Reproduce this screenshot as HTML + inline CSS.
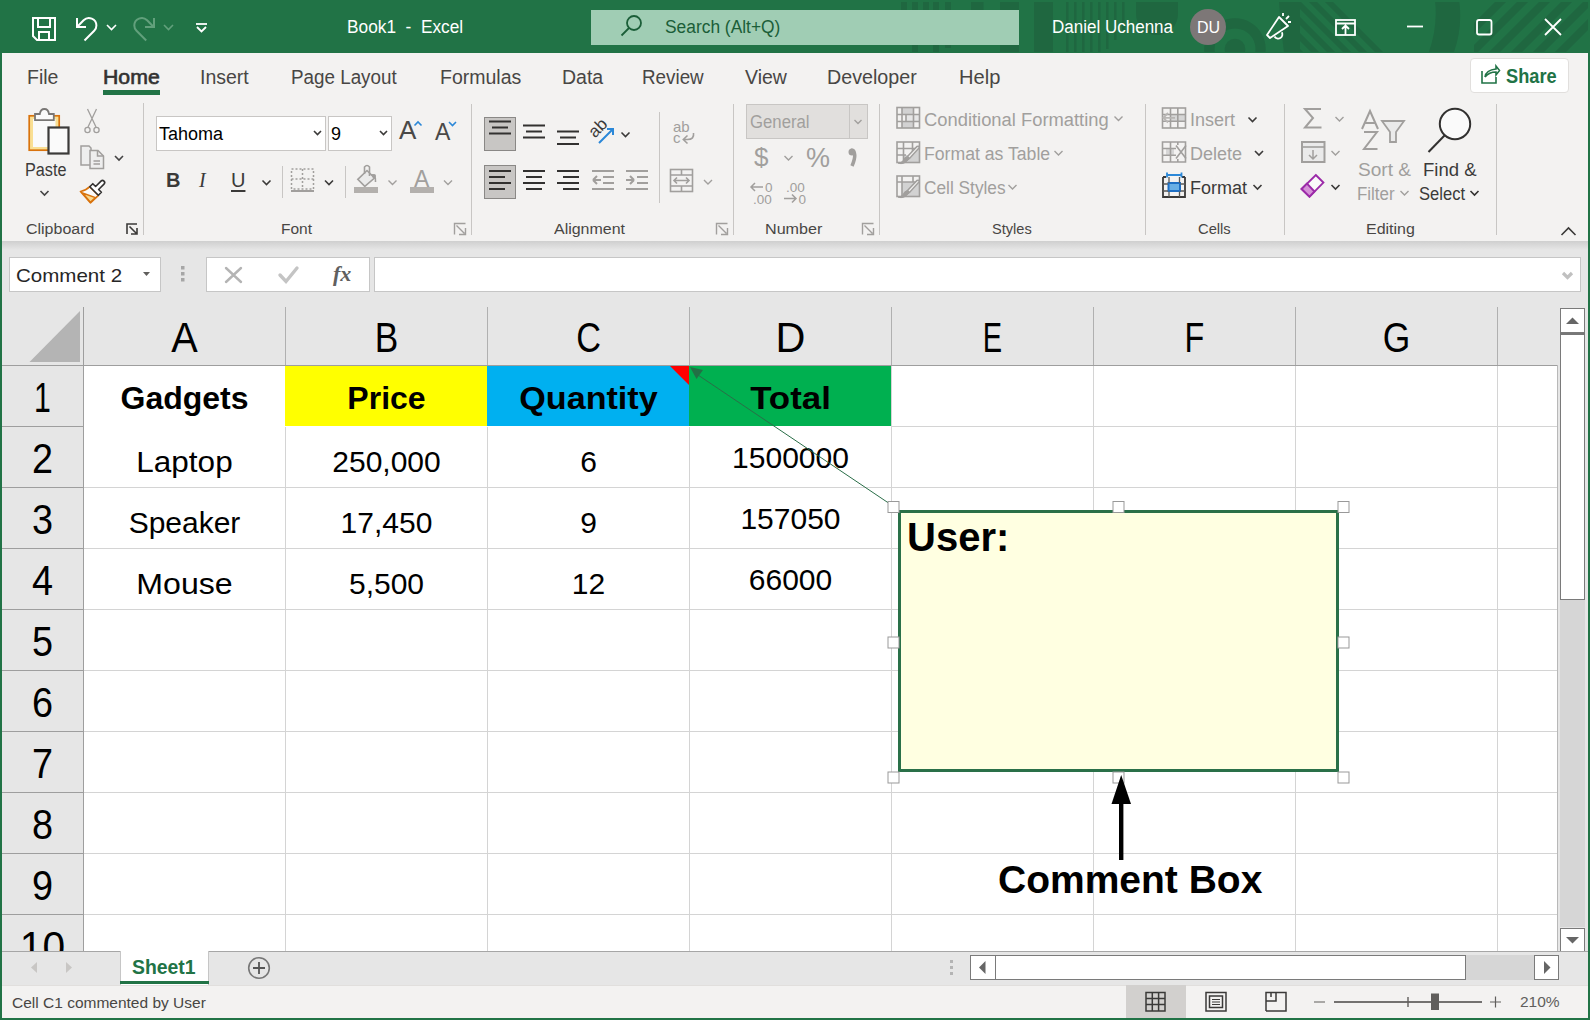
<!DOCTYPE html>
<html><head><meta charset="utf-8">
<style>
*{margin:0;padding:0;box-sizing:border-box}
html,body{width:1590px;height:1020px;overflow:hidden;background:#f3f2f1;font-family:"Liberation Sans",sans-serif;position:relative}
.a{position:absolute}
.t{position:absolute;white-space:nowrap;line-height:1}
svg{position:absolute;overflow:visible}
#title{left:0;top:0;width:1590px;height:53px;background:#217346}
.tab{position:absolute;top:68px;font-size:19.5px;color:#484644;white-space:nowrap;line-height:1}
.grp{position:absolute;top:221px;font-size:15.5px;color:#484644;white-space:nowrap;line-height:1}
.sep{position:absolute;width:1px;background:#c8c6c4}
.rb{font-size:17px;color:#444;}
.dis{color:#a19f9d}
.gl{position:absolute;background:#d4d4d4}
.colh{position:absolute;top:307px;height:58px;font-size:38px;color:#000;text-align:center;line-height:1}
.rowh{position:absolute;left:2px;width:81px;font-size:38px;color:#000;text-align:center;line-height:1}
.cell{position:absolute;font-size:30px;text-align:center;line-height:1;color:#000}
</style></head><body>
<!-- window border -->
<div class="a" style="left:0;top:0;width:2px;height:1020px;background:#217346;z-index:50"></div>
<div class="a" style="left:1588px;top:0;width:2px;height:1020px;background:#217346;z-index:50"></div>
<div class="a" style="left:0;top:1018px;width:1590px;height:2px;background:#217346;z-index:50"></div>

<!-- TITLE BAR -->
<div id="title" class="a"></div>

<svg style="left:0;top:0" width="1590" height="53">
 <defs><clipPath id="tb"><rect x="0" y="2" width="1590" height="50"/></clipPath><clipPath id="rs"><rect x="1474" y="2" width="114" height="50"/></clipPath><clipPath id="lbclip"><rect x="1300" y="2" width="100" height="50"/></clipPath></defs>
 <g fill="#1f6640" opacity="0.9" clip-path="url(#tb)">
  <rect x="901" y="0" width="6" height="10"/>
  <rect x="912" y="0" width="6" height="52"/>
  <rect x="923" y="0" width="6" height="10"/>
  <rect x="933" y="0" width="6" height="52"/>
  <rect x="945" y="0" width="6" height="48"/>
  <rect x="971" y="0" width="12.5" height="10"/>
  <rect x="1000" y="0" width="19" height="52"/>
  <rect x="1034" y="0" width="19" height="52"/>
  <rect x="1066" y="0" width="2.5" height="52"/>
  <rect x="1074" y="0" width="2.5" height="52"/>
  <rect x="1082" y="0" width="2.5" height="52"/>
  <rect x="1090" y="0" width="2.5" height="52"/>
  <rect x="1098" y="0" width="2.5" height="52"/>
  <rect x="1106" y="0" width="2.5" height="49"/>
  <rect x="1114" y="0" width="2.5" height="40"/>
  <rect x="1122" y="0" width="2.5" height="30"/>
  <path d="M1136 0 H1178 V14 A21 21 0 0 1 1136 14 Z"/>
  <path fill-rule="evenodd" d="M1235 18.3 A30.7 30.7 0 1 1 1234.9 18.3 Z M1235 28.5 A20.5 20.5 0 1 0 1235.1 28.5 Z"/>
  <circle cx="1235" cy="49" r="10.3"/>
  <path d="M1279 0 L1331 0 L1383 52 L1284 52 Q1280 26 1279 0 Z" clip-path="url(#tb)"/>
  <path d="M1435 0 L1459 0 Q1463 26 1454 52 L1429 52 Q1438 26 1435 0 Z"/>
  <path d="M1497 0 L1508 0 L1456 52 L1445 52 Z" clip-path="url(#rs)"/>
  <path d="M1519 0 L1530 0 L1478 52 L1467 52 Z" clip-path="url(#rs)"/>
  <path d="M1541 0 L1552 0 L1500 52 L1489 52 Z" clip-path="url(#rs)"/>
  <path d="M1563 0 L1574 0 L1522 52 L1511 52 Z" clip-path="url(#rs)"/>
  <path d="M1585 0 L1596 0 L1544 52 L1533 52 Z" clip-path="url(#rs)"/>
  <path d="M1607 0 L1618 0 L1566 52 L1555 52 Z" clip-path="url(#rs)"/>
  <g fill="#217346" clip-path="url(#lbclip)">
   <path d="M1235 0 L1243 0 L1295 52 L1287 52 Z"/>
   <path d="M1251 0 L1259 0 L1311 52 L1303 52 Z"/>
   <path d="M1267 0 L1275 0 L1327 52 L1319 52 Z"/>
   <path d="M1283 0 L1291 0 L1343 52 L1335 52 Z"/>
   <path d="M1299 0 L1307 0 L1359 52 L1351 52 Z"/>
   <path d="M1315 0 L1323 0 L1375 52 L1367 52 Z"/>
  </g>
 </g>
 <g fill="none" stroke="#fff" stroke-width="2">
  <!-- save -->
  <path d="M33 18 H55 V40 H37 L33 36 Z"/>
  <path d="M38 18 V27 H50 V18"/>
  <path d="M39 40 V32 H49 V40"/>
  <!-- undo -->
  <path d="M77 18 V27 H86"/>
  <path d="M77.5 26.5 L83.6 20.2 A7.5 7.5 0 0 1 96.4 25.5 A7.5 7.5 0 0 1 94.2 30.8 L84.5 40.5"/>
  <path d="M107 25 L111.5 29.5 L116 25" stroke-width="1.6"/>
 </g>
 <g fill="none" stroke="#62a07c" stroke-width="2">
  <path d="M154 18 V27 H145"/>
  <path d="M153.2 26.5 L147.1 20.2 A7.5 7.5 0 0 0 134.3 25.5 A7.5 7.5 0 0 0 136.5 30.8 L146.2 40.5"/>
  <path d="M164 25 L168.5 29.5 L173 25" stroke-width="1.6"/>
 </g>
 <g fill="none" stroke="#fff" stroke-width="1.8">
  <path d="M196 24 H207"/>
  <path d="M197 27 L201.5 31.5 L206 27"/>
 </g>
 <!-- search box -->
 <rect x="591" y="10" width="428" height="35" fill="#a0cdb4"/>
 <g fill="none" stroke="#1b5e38" stroke-width="1.8">
  <circle cx="634" cy="23" r="7"/>
  <path d="M629 28 L621.5 35.5"/>
 </g>
 <!-- avatar -->
 <circle cx="1208" cy="27" r="18" fill="#7d7777"/>
 <!-- megaphone -->
 <g fill="none" stroke="#fff" stroke-width="1.8" stroke-linejoin="round">
  <path d="M1267 35 L1279 17 L1288 26 L1270 38 Z"/>
  <path d="M1274.5 36.5 A3.8 3.8 0 0 0 1281.8 32.2"/>
  <path d="M1283 16 L1283 13 M1286 19 L1289 16 M1288 22 L1291 22"/>
 </g>
 <!-- ribbon display -->
 <g fill="none" stroke="#fff" stroke-width="1.8">
  <rect x="1336" y="20" width="19" height="15"/>
  <path d="M1336 23.5 H1355 M1345.5 35 V26 M1342 29 L1345.5 25.5 L1349 29"/>
  <path d="M1407 26.5 H1423"/>
  <rect x="1477" y="20" width="14.5" height="14.5" rx="2"/>
  <path d="M1545 19 L1561 35 M1561 19 L1545 35"/>
 </g>
</svg>
<div class="t" style="left:347px;top:18px;font-size:18px;color:#fff;transform:scaleX(0.96);transform-origin:0 0">Book1&nbsp; -&nbsp; Excel</div>
<div class="t" style="left:665px;top:18px;font-size:18px;color:#1b5e38;transform:scaleX(0.965);transform-origin:0 0">Search (Alt+Q)</div>
<div class="t" style="left:1052px;top:18px;font-size:18px;color:#fff;transform:scaleX(0.945);transform-origin:0 0">Daniel Uchenna</div>
<div class="t" style="left:1197px;top:20px;font-size:16px;color:#fff">DU</div>

<!-- TABS -->
<div class="tab" style="left:27px">File</div>
<div class="tab" style="left:103px;color:#323130;-webkit-text-stroke:0.6px #323130;transform:scaleX(1.09);transform-origin:0 0">Home</div>
<div class="a" style="left:103px;top:90px;width:57px;height:5px;background:#217346"></div>
<div class="tab" style="left:200px">Insert</div>
<div class="tab" style="left:291px;transform:scaleX(0.965);transform-origin:0 0">Page Layout</div>
<div class="tab" style="left:440px">Formulas</div>
<div class="tab" style="left:562px">Data</div>
<div class="tab" style="left:642px;transform:scaleX(0.965);transform-origin:0 0">Review</div>
<div class="tab" style="left:745px">View</div>
<div class="tab" style="left:827px;transform:scaleX(1.01);transform-origin:0 0">Developer</div>
<div class="tab" style="left:959px;transform:scaleX(1.03);transform-origin:0 0">Help</div>
<div class="a" style="left:1470px;top:58px;width:99px;height:35px;background:#fff;border:1px solid #e1dfdd;border-radius:4px"></div>
<svg style="left:0;top:0" width="1590" height="100">
 <g fill="none" stroke="#217346" stroke-width="1.6">
  <path d="M1482 71 V83 H1496 V77"/>
  <path d="M1485 77 Q1486 70 1496 69 V66 L1499.5 70.5 L1496 75 V72 Q1489 72 1485 77"/>
 </g>
</svg>
<div class="t" style="left:1506px;top:66px;font-size:20px;color:#217346;font-weight:bold;transform:scaleX(0.91);transform-origin:0 0">Share</div>

<!-- RIBBON CONTENT -->
<svg style="left:0;top:96px" width="1590" height="145" viewBox="0 96 1590 145">
 <!-- separators -->
 <g stroke="#c8c6c4" stroke-width="1">
  <path d="M143.5 103 V235 M471.5 104 V235 M733.5 104 V235 M879.5 104 V235 M1145.5 104 V235 M1284.5 104 V235 M1496.5 104 V235"/>
  <path d="M282.5 166 V198 M345.5 166 V198 M659.5 112 V203"/>
 </g>
 <!-- launchers -->
 <g fill="none" stroke="#3b3a39" stroke-width="1.6">
  <path d="M127 234 V224 H137 M129.5 226.5 L136.5 233.5 M131 234 H137 V228"/>
 </g>
 <g fill="none" stroke="#a19f9d" stroke-width="1.4">
  <path d="M454.5 234.5 V223.5 H465.5 M456.5 225.5 L464.5 233.5 M459 234.5 H465.5 V228"/>
  <path d="M716.5 234.5 V223.5 H727.5 M718.5 225.5 L726.5 233.5 M721 234.5 H727.5 V228"/>
  <path d="M862.5 234.5 V223.5 H873.5 M864.5 225.5 L872.5 233.5 M867 234.5 H873.5 V228"/>
 </g>
 <!-- Paste -->
 <rect x="29.2" y="115.8" width="30" height="34.4" fill="#f9df93" stroke="#d9730d" stroke-width="1.7"/>
 <rect x="33" y="119" width="22.5" height="28" fill="#fafafa"/>
 <path d="M35 120.2 V114 H39.8 Q40.5 109 44.4 109 Q48.3 109 49 114 H53.8 V120.2 Z" fill="#fafafa" stroke="#797775" stroke-width="1.8"/>
 <rect x="48.5" y="127.5" width="20" height="26" fill="#fafafa" stroke="#3b3a39" stroke-width="2.2"/>
 <g fill="none" stroke="#444" stroke-width="1.6">
  <path d="M40.5 191 L44.5 195 L48.5 191"/>
  <path d="M115 156 L119 160 L123 156"/>
 </g>
 <!-- scissors -->
 <g fill="none" stroke="#a19f9d" stroke-width="1.3">
  <path d="M87.5 109 L96 127 M96.5 109 L88 127"/>
  <circle cx="87.5" cy="130" r="2.6"/><circle cx="96.5" cy="130" r="2.6"/>
 </g>
 <!-- copy -->
 <g fill="#eeeeee" stroke="#a19f9d" stroke-width="1.5">
  <path d="M81 146 H89 L91 148 V165 H81 Z"/>
  <path d="M90 150.5 H98 L103.5 156 V168.5 H90 Z"/>
  <path d="M97.5 150.5 V156 H103.5 M93.5 161 H100 M93.5 164 H100" fill="none"/>
 </g>
 <!-- format painter -->
 <path d="M89.8 186.7 Q86 190.5 80.5 191.5 L90.4 202.8 L98.4 195.3 Z" fill="#fafafa" stroke="#d9730d" stroke-width="1.7" stroke-linejoin="round"/>
 <path d="M82.5 193 L95.5 197.6 L90.4 202.3 Z" fill="#f8d78c" stroke="#d9730d" stroke-width="1.5" stroke-linejoin="round"/>
 <path d="M89.8 186.7 L92.8 183.7 L95.6 186.5 L101 181.1 Q102.5 179.6 104 181.1 Q105.5 182.6 104 184.1 L98.6 189.5 L101.4 192.3 L98.4 195.3 Z" fill="#fff" stroke="#323130" stroke-width="1.6" stroke-linejoin="round"/>
 <!-- Font group -->
 <rect x="156.5" y="116.5" width="169" height="34" fill="#fff" stroke="#c8c6c4"/>
 <rect x="328.5" y="116.5" width="63" height="34" fill="#fff" stroke="#c8c6c4"/>
 <g fill="none" stroke="#3b3a39" stroke-width="1.6">
  <path d="M314 131 L317.5 134.5 L321 131"/>
  <path d="M380 131 L383.5 134.5 L387 131"/>
  <path d="M262.5 180.5 L266.5 184.5 L270.5 180.5"/>
  <path d="M325 180.5 L329 184.5 L333 180.5"/>
 </g>
 <g fill="none" stroke="#2b88d8" stroke-width="1.6">
  <path d="M414.5 125.5 L418 122 L421.5 125.5"/>
  <path d="M449 122 L452.5 125.5 L456 122"/>
 </g>
 <g fill="none" stroke="#a19f9d" stroke-width="1.4">
  <path d="M388.5 180.5 L392.5 184.5 L396.5 180.5"/>
  <path d="M444 180.5 L448 184.5 L452 180.5"/>
 </g>
 <!-- borders icon -->
 <g stroke="#a19f9d" stroke-width="1.5" stroke-dasharray="2 2" fill="none">
  <rect x="291.5" y="169" width="22" height="20"/>
  <path d="M302.5 169 V189 M291.5 179 H313.5"/>
 </g>
 <path d="M291 191 H314" stroke="#a19f9d" stroke-width="2"/>
 <!-- fill color -->
 <g stroke="#a19f9d" stroke-width="1.6">
  <path d="M357.8 179.3 L367 170.5 L374.5 178 L364.8 186.3 Z" fill="#ebebeb"/>
  <path d="M364.5 174 V167 Q367 164 369.5 167 V176" fill="none"/>
  <path d="M371 175 Q376 174 375.5 182" fill="none"/>
 </g>
 <circle cx="374" cy="176" r="2" fill="#a19f9d"/>
 <rect x="354" y="187" width="24" height="6" fill="#b3b0ad"/>
 <rect x="410" y="187" width="24" height="6" fill="#b3b0ad"/>
 <!-- Alignment -->
 <rect x="484.5" y="117.5" width="31" height="33" fill="#c8c6c4" stroke="#8a8886"/>
 <rect x="484.5" y="165.5" width="31" height="33" fill="#c8c6c4" stroke="#8a8886"/>
 <g stroke="#323130" stroke-width="2">
  <path d="M489 121.5 H511 M492 127.5 H508 M489 133.5 H511"/>
  <path d="M523 125.5 H545 M526 131.5 H542 M523 137.5 H545"/>
  <path d="M557 131.5 H579 M560 137.5 H576 M557 144 H579"/>
  <path d="M489 171 H511 M489 177 H505 M489 183 H511 M489 189 H505"/>
  <path d="M523 171 H545 M526 177 H542 M523 183 H545 M526 189 H542"/>
  <path d="M557 171 H579 M563 177 H579 M557 183 H579 M563 189 H579"/>
 </g>
 <g stroke="#a19f9d" stroke-width="2" fill="none">
  <path d="M592 171 H614 M603 177 H614 M603 183 H614 M592 189 H614 M593 180 L597 176 M593 180 L597 184 M593 180 H601"/>
  <path d="M626 171 H648 M637 177 H648 M637 183 H648 M626 189 H648 M634 180 L630 176 M634 180 L630 184 M626 180 H634"/>
 </g>
 <text x="0" y="0" transform="translate(595 138.5) rotate(-45)" font-family="Liberation Sans" font-size="17" fill="#3b3a39">ab</text>
 <path d="M599 143 L613 129 M607 129 H613 V135" stroke="#2b88d8" stroke-width="2" fill="none"/>
 <path d="M621.5 132.5 L625.5 136.5 L629.5 132.5" stroke="#3b3a39" stroke-width="1.6" fill="none"/>
 <path d="M704 180 L708 184 L712 180" stroke="#a19f9d" stroke-width="1.4" fill="none"/>
 <!-- merge icon -->
 <g stroke="#a19f9d" stroke-width="1.6" fill="none">
  <rect x="670.5" y="169.5" width="22" height="22"/>
  <path d="M670.5 175 H692.5 M670.5 186 H692.5 M681.5 169.5 V175 M681.5 186 V191.5 M674 180.5 H689 M677 177.5 L674 180.5 L677 183.5 M686 177.5 L689 180.5 L686 183.5"/>
  <path d="M693.5 133 Q694.5 139.5 687.5 139.5 H683.5 M687.5 135.5 L683.3 139.5 L687.5 143.5"/>
 </g>
 <!-- Number -->
 <rect x="746.5" y="104.5" width="121" height="34" fill="#e1dfdd" stroke="#c8c6c4"/>
 <path d="M849.5 105 V138" stroke="#c8c6c4"/>
 <path d="M854.5 120 L858 123.5 L861.5 120" stroke="#a19f9d" stroke-width="1.4" fill="none"/>
 <path d="M784.5 156 L788.5 160 L792.5 156" stroke="#a19f9d" stroke-width="1.4" fill="none"/>
 <path d="M851 150 Q858 152 852 166" stroke="#a19f9d" stroke-width="3.5" fill="none"/>
 <circle cx="852" cy="152" r="3.5" fill="#a19f9d"/>
 <!-- Styles icons -->
 <g fill="#d2d2d2">
  <rect x="902" y="108" width="11" height="6"/><rect x="902" y="122" width="11" height="6"/>
  <rect x="906" y="115" width="13" height="6" fill="#e6e6e6"/>
  <rect x="903" y="155" width="16" height="7"/><rect x="912" y="149" width="7" height="6"/>
  <rect x="902" y="182" width="17" height="14"/>
 </g>
 <g stroke="#a19f9d" stroke-width="1.6" fill="none">
  <rect x="897" y="107.5" width="22.5" height="20.5"/>
  <path d="M897 114.5 H919.5 M897 121.5 H919.5 M902 107.5 V128 M913.5 107.5 V128 M906 114.5 V121.5"/>
  <rect x="897" y="142" width="22.5" height="20.5"/>
  <path d="M897 148.5 H919.5 M897 155 H906 M903.5 142 V162.5 M912.5 142 V152"/>
  <rect x="897" y="176" width="22.5" height="20.5"/>
  <path d="M897 182 H919.5 M902 176 V196.5 M913 176 V182"/>
 </g>
 <g stroke="#a19f9d" fill="#f3f2f1">
  <path d="M907.5 156.5 L917 146.5 Q919.5 145.5 919 148 L909.5 158.5 Z" stroke-width="1.5"/>
  <path d="M907.5 156.5 Q904 157 903 161 Q901 163 898 163 Q904 165.5 909.5 158.5" fill="#a19f9d" stroke-width="1"/>
  <path d="M907.5 190.5 L917 180.5 Q919.5 179.5 919 182 L909.5 192.5 Z" stroke-width="1.5"/>
  <path d="M907.5 190.5 Q904 191 903 195 Q901 197 898 197 Q904 199.5 909.5 192.5" fill="#a19f9d" stroke-width="1"/>
 </g>
 <!-- Cells icons -->
 <g fill="#d6d6d6">
  <rect x="1171" y="115" width="14" height="6"/>
  <rect x="1166" y="148.5" width="8" height="6.5"/>
 </g>
 <g stroke="#a19f9d" stroke-width="1.6" fill="none">
  <rect x="1162.5" y="108" width="23" height="20"/>
  <path d="M1162.5 114.5 H1185.5 M1162.5 121.2 H1185.5 M1170.5 108 V128 M1177.8 108 V128"/>
  <path d="M1163.5 117.8 H1175 M1168 113 L1163.3 117.8 L1168 122.5" stroke="#b8b6b4" stroke-width="1.8"/>
  <path d="M1162.5 142 H1185.5 V162 H1162.5 Z"/>
  <path d="M1162.5 148.5 H1176 M1162.5 155.2 H1176 M1170.5 142 V162 M1177.8 142 V145 M1177.8 159 V162"/>
 </g>
 <path d="M1176 145.5 L1186 158.5 M1186 145.5 L1176 158.5" stroke="#a19f9d" stroke-width="1.6"/>
 <rect x="1168.5" y="183" width="11.5" height="8" fill="#69afe5" stroke="#1e6fc4" stroke-width="2"/>
 <g stroke="#3b3a39" stroke-width="1.8" fill="none">
  <path d="M1163 177 V197 H1185 V177 M1163 177 H1166 M1182 177 H1185"/>
  <path d="M1163 184 H1168 M1180.5 184 H1185 M1163 191 H1168 M1180.5 191 H1185 M1163 184 M1169 177 V183 M1179.5 177 V183 M1169 191.5 V197 M1179.5 191.5 V197" stroke="#5a5958" stroke-width="1.3"/>
 </g>
 <path d="M1167 175 H1181.5 M1167 172.5 V177.5 M1181.5 172.5 V177.5" stroke="#2b88d8" stroke-width="1.8" fill="none"/>
 <g stroke="#3b3a39" stroke-width="1.6" fill="none">
  <path d="M1248.5 117.5 L1252.5 121.5 L1256.5 117.5"/>
  <path d="M1255 151 L1259 155 L1263 151"/>
  <path d="M1253.5 185 L1257.5 189 L1261.5 185"/>
 </g>
 <g stroke="#a19f9d" stroke-width="1.4" fill="none">
  <path d="M1114.5 116.5 L1118.5 120.5 L1122.5 116.5"/>
  <path d="M1054.5 151 L1058.5 155 L1062.5 151"/>
  <path d="M1008.5 185 L1012.5 189 L1016.5 185"/>
 </g>
 <!-- Editing -->
 <g stroke="#a19f9d" stroke-width="2" fill="none">
  <path d="M1321 109 H1305 L1313 118 L1305 127.5 H1321.5"/>
  <path d="M1335.5 117 L1339.5 121 L1343.5 117" stroke-width="1.4"/>
  <rect x="1302" y="142" width="22.5" height="20" fill="#eaeaea"/>
  <path d="M1302 147 H1324.5" stroke-width="1.6"/>
  <path d="M1313 150 V159 M1309 155 L1313 159 L1317 155" stroke-width="1.5"/>
  <path d="M1331.5 151 L1335.5 155 L1339.5 151" stroke-width="1.4"/>
  <path d="M1362 129 L1370 111 L1378 129 M1365 123 H1375" stroke-width="2"/>
  <path d="M1364 132 H1377 L1364 149 H1377.5" stroke-width="2"/>
  <path d="M1382 121 H1404 L1396 132 V142 H1390 V132 Z" fill="#eaeaea" stroke-width="1.8"/>
  <path d="M1400.5 191 L1404.5 195 L1408.5 191" stroke-width="1.4"/>
 </g>
 <path d="M1315.8 175 L1323.4 182.6 L1309.5 196.6 L1301.6 189 Z" fill="#fafafa" stroke="#9b2aa8" stroke-width="1.9" stroke-linejoin="miter"/>
 <path d="M1301.6 189 L1307 183.6 L1314.5 191.5 L1309.5 196.6 Z" fill="#d590d8" stroke="#9b2aa8" stroke-width="1.9"/>
 <path d="M1331.5 185 L1335.5 189 L1339.5 185" stroke="#3b3a39" stroke-width="1.6" fill="none"/>
 <circle cx="1455" cy="124" r="15.2" fill="#fafafa" stroke="#323130" stroke-width="2"/>
 <path d="M1444.5 135.5 L1428.5 152" stroke="#323130" stroke-width="2"/>
 <path d="M1470.5 191 L1474.5 195 L1478.5 191" stroke="#323130" stroke-width="1.6" fill="none"/>
 <path d="M1561.5 235 L1568.5 228 L1575.5 235" stroke="#3b3a39" stroke-width="1.6" fill="none"/>
 <g font-family="Liberation Sans" font-size="13.5" fill="#a19f9d">
  <text x="765" y="191.5">0</text><text x="753" y="204">.00</text>
  <text x="786" y="191.5">.00</text><text x="798.5" y="204">0</text>
 </g>
 <g stroke="#a19f9d" stroke-width="1.5" fill="none">
  <path d="M751 187 H763 M755 183 L751 187 L755 191"/>
  <path d="M784 198.5 H796 M792 194.5 L796 198.5 L792 202.5"/>
 </g>
</svg>
<div class="t rb" style="left:25px;top:161px;font-size:18px;color:#3b3a39;transform:scaleX(0.9);transform-origin:0 0">Paste</div>
<div class="t grp" style="left:26px;transform:scaleX(1.03);transform-origin:0 0">Clipboard</div>
<div class="t grp" style="left:281px">Font</div>
<div class="t grp" style="left:554px;transform:scaleX(1.03);transform-origin:0 0">Alignment</div>
<div class="t grp" style="left:765px;transform:scaleX(1.04);transform-origin:0 0">Number</div>
<div class="t grp" style="left:992px;transform:scaleX(0.94);transform-origin:0 0">Styles</div>
<div class="t grp" style="left:1198px;transform:scaleX(0.95);transform-origin:0 0">Cells</div>
<div class="t grp" style="left:1366px;transform:scaleX(1.03);transform-origin:0 0">Editing</div>
<div class="t" style="left:159px;top:125px;font-size:18px;color:#000">Tahoma</div>
<div class="t" style="left:331px;top:125px;font-size:18px;color:#000">9</div>
<div class="t" style="left:399px;top:117px;font-size:26px;color:#4a4948">A</div>
<div class="t" style="left:435px;top:121px;font-size:23px;color:#4a4948">A</div>
<div class="t" style="left:166px;top:170px;font-size:20px;color:#3b3a39;font-weight:bold">B</div>
<div class="t" style="left:199px;top:170px;font-size:20px;color:#3b3a39;font-family:'Liberation Serif',serif;font-style:italic">I</div>
<div class="t" style="left:231px;top:170px;font-size:20px;color:#3b3a39;text-decoration:underline;text-underline-offset:3px">U</div>
<div class="t" style="left:414px;top:168px;font-size:23px;color:#a19f9d">A</div>
<div class="t" style="left:750px;top:113px;font-size:18px;color:#a19f9d;transform:scaleX(0.93);transform-origin:0 0">General</div>
<div class="t" style="left:754px;top:144px;font-size:26px;color:#a19f9d">$</div>
<div class="t" style="left:806px;top:145px;font-size:27px;color:#a19f9d">%</div>
<div class="t" style="left:596px;top:122px;font-size:15px;color:#3b3a39;transform:rotate(-45deg);transform-origin:0 0;display:none">ab</div>
<div class="t" style="left:673px;top:121px;font-size:15px;color:#a19f9d;line-height:0.75">ab<br>c</div>


<div class="t rb dis" style="left:924px;top:111px;font-size:18px;transform:scaleX(1.02);transform-origin:0 0">Conditional Formatting</div>
<div class="t rb dis" style="left:924px;top:145px;font-size:18px;transform:scaleX(0.98);transform-origin:0 0">Format as Table</div>
<div class="t rb dis" style="left:924px;top:179px;font-size:18px;transform:scaleX(0.96);transform-origin:0 0">Cell Styles</div>
<div class="t rb dis" style="left:1190px;top:111px;font-size:18px">Insert</div>
<div class="t rb dis" style="left:1190px;top:145px;font-size:18px">Delete</div>
<div class="t rb" style="left:1190px;top:179px;font-size:18px;color:#3b3a39">Format</div>
<div class="t rb dis" style="left:1358px;top:161px;font-size:18px;transform:scaleX(1.06);transform-origin:0 0">Sort &amp;</div>
<div class="t rb dis" style="left:1357px;top:185px;font-size:18px;transform:scaleX(0.94);transform-origin:0 0">Filter</div>
<div class="t rb" style="left:1423px;top:161px;font-size:18px;color:#3b3a39;transform:scaleX(1.03);transform-origin:0 0">Find &amp;</div>
<div class="t rb" style="left:1419px;top:185px;font-size:18px;color:#3b3a39;transform:scaleX(0.92);transform-origin:0 0">Select</div>
<!-- RIBBON shadow -->
<div class="a" style="left:0;top:241px;width:1590px;height:1013px;background:#e6e6e6"></div>
<div class="a" style="left:0;top:241px;width:1590px;height:9px;background:linear-gradient(#cfcfcf,#e6e6e6)"></div>

<!-- FORMULA BAR -->
<div class="a" style="left:9px;top:257px;width:152px;height:35px;background:#fff;border:1px solid #c6c6c6"></div>
<div class="t" style="left:16px;top:266px;font-size:19px;color:#262626;transform:scaleX(1.08);transform-origin:0 0">Comment 2</div>
<div class="a" style="left:206px;top:257px;width:164px;height:35px;background:#fff;border:1px solid #c6c6c6"></div>
<div class="a" style="left:374px;top:257px;width:1207px;height:35px;background:#fff;border:1px solid #c6c6c6"></div>
<svg style="left:0;top:250px" width="1590" height="50" viewBox="0 250 1590 50">
 <path d="M143 272 H150 L146.5 276 Z" fill="#605e5c"/>
 <g fill="#a6a6a6"><rect x="181" y="266" width="3.5" height="3.5"/><rect x="181" y="272" width="3.5" height="3.5"/><rect x="181" y="278" width="3.5" height="3.5"/></g>
 <path d="M226 268 L241 282 M241 268 L226 282" stroke="#b4b4b4" stroke-width="2.4" stroke-linecap="round"/>
 <path d="M280 275 L286 281.5 L297 268" stroke="#c4c4c4" stroke-width="3.4" fill="none" stroke-linecap="round"/>
 <path d="M1563 273 L1567.5 277.5 L1572 273" stroke="#c0c0c0" stroke-width="3.2" fill="none"/>
</svg>
<div class="t" style="left:333px;top:263px;font-size:22px;color:#606060;font-family:'Liberation Serif',serif;font-style:italic;font-weight:bold">fx</div>

<!-- GRID -->
<div class="a" style="left:2px;top:307px;width:1555px;height:644px;background:#fff"></div>
<div class="a" style="left:2px;top:307px;width:1555px;height:58px;background:#e6e6e6"></div>
<div class="a" style="left:2px;top:365px;width:81px;height:586px;background:#e6e6e6"></div>
<div class="a" style="left:285px;top:366px;width:202px;height:60px;background:#ffff00"></div>
<div class="a" style="left:487px;top:366px;width:202px;height:60px;background:#00b0f0"></div>
<div class="a" style="left:689px;top:366px;width:202px;height:60px;background:#00b050"></div>
<div class="gl" style="left:891px;top:426px;width:666px;height:1px"></div>
<div class="a" style="left:2px;top:426px;width:81px;height:1px;background:#9e9e9e"></div>
<div class="gl" style="left:84px;top:487px;width:1473px;height:1px"></div>
<div class="a" style="left:2px;top:487px;width:81px;height:1px;background:#9e9e9e"></div>
<div class="gl" style="left:84px;top:548px;width:1473px;height:1px"></div>
<div class="a" style="left:2px;top:548px;width:81px;height:1px;background:#9e9e9e"></div>
<div class="gl" style="left:84px;top:609px;width:1473px;height:1px"></div>
<div class="a" style="left:2px;top:609px;width:81px;height:1px;background:#9e9e9e"></div>
<div class="gl" style="left:84px;top:670px;width:1473px;height:1px"></div>
<div class="a" style="left:2px;top:670px;width:81px;height:1px;background:#9e9e9e"></div>
<div class="gl" style="left:84px;top:731px;width:1473px;height:1px"></div>
<div class="a" style="left:2px;top:731px;width:81px;height:1px;background:#9e9e9e"></div>
<div class="gl" style="left:84px;top:792px;width:1473px;height:1px"></div>
<div class="a" style="left:2px;top:792px;width:81px;height:1px;background:#9e9e9e"></div>
<div class="gl" style="left:84px;top:853px;width:1473px;height:1px"></div>
<div class="a" style="left:2px;top:853px;width:81px;height:1px;background:#9e9e9e"></div>
<div class="gl" style="left:84px;top:914px;width:1473px;height:1px"></div>
<div class="a" style="left:2px;top:914px;width:81px;height:1px;background:#9e9e9e"></div>
<div class="gl" style="left:285px;top:427px;width:1px;height:524px"></div>
<div class="a" style="left:285px;top:307px;width:1px;height:58px;background:#b0b0b0"></div>
<div class="gl" style="left:487px;top:427px;width:1px;height:524px"></div>
<div class="a" style="left:487px;top:307px;width:1px;height:58px;background:#b0b0b0"></div>
<div class="gl" style="left:689px;top:427px;width:1px;height:524px"></div>
<div class="a" style="left:689px;top:307px;width:1px;height:58px;background:#b0b0b0"></div>
<div class="gl" style="left:891px;top:427px;width:1px;height:524px"></div>
<div class="gl" style="left:891px;top:366px;width:1px;height:61px"></div>
<div class="a" style="left:891px;top:307px;width:1px;height:58px;background:#b0b0b0"></div>
<div class="gl" style="left:1093px;top:427px;width:1px;height:524px"></div>
<div class="gl" style="left:1093px;top:366px;width:1px;height:61px"></div>
<div class="a" style="left:1093px;top:307px;width:1px;height:58px;background:#b0b0b0"></div>
<div class="gl" style="left:1295px;top:427px;width:1px;height:524px"></div>
<div class="gl" style="left:1295px;top:366px;width:1px;height:61px"></div>
<div class="a" style="left:1295px;top:307px;width:1px;height:58px;background:#b0b0b0"></div>
<div class="gl" style="left:1497px;top:427px;width:1px;height:524px"></div>
<div class="gl" style="left:1497px;top:366px;width:1px;height:61px"></div>
<div class="a" style="left:1497px;top:307px;width:1px;height:58px;background:#b0b0b0"></div>
<div class="a" style="left:2px;top:365px;width:1555px;height:1px;background:#9e9e9e"></div>
<div class="a" style="left:83px;top:307px;width:1px;height:644px;background:#9e9e9e"></div>
<div class="a" style="left:1557px;top:365px;width:1px;height:586px;background:#b8b8b8"></div>
<svg style="left:0;top:300px" width="90" height="70" viewBox="0 300 90 70"><path d="M29.5 362 L80 311 V362 Z" fill="#b4b4b4"/></svg>
<div class="colh" style="left:84px;width:201px;padding-top:10px;font-size:42px;transform:scaleX(0.945)">A</div>
<div class="colh" style="left:286px;width:201px;padding-top:10px;font-size:42px;transform:scaleX(0.84)">B</div>
<div class="colh" style="left:488px;width:201px;padding-top:10px;font-size:42px;transform:scaleX(0.815)">C</div>
<div class="colh" style="left:690px;width:201px;padding-top:10px;font-size:42px;transform:scaleX(0.985)">D</div>
<div class="colh" style="left:892px;width:201px;padding-top:10px;font-size:42px;transform:scaleX(0.69)">E</div>
<div class="colh" style="left:1094px;width:201px;padding-top:10px;font-size:42px;transform:scaleX(0.77)">F</div>
<div class="colh" style="left:1296px;width:201px;padding-top:10px;font-size:42px;transform:scaleX(0.843)">G</div>
<div class="rowh" style="top:366px;padding-top:10.5px;font-size:42px;transform:scaleX(0.72)">1</div>
<div class="rowh" style="top:427px;padding-top:10.5px;font-size:42px;transform:scaleX(0.9)">2</div>
<div class="rowh" style="top:488px;padding-top:10.5px;font-size:42px;transform:scaleX(0.9)">3</div>
<div class="rowh" style="top:549px;padding-top:10.5px;font-size:42px;transform:scaleX(0.9)">4</div>
<div class="rowh" style="top:610px;padding-top:10.5px;font-size:42px;transform:scaleX(0.9)">5</div>
<div class="rowh" style="top:671px;padding-top:10.5px;font-size:42px;transform:scaleX(0.9)">6</div>
<div class="rowh" style="top:732px;padding-top:10.5px;font-size:42px;transform:scaleX(0.9)">7</div>
<div class="rowh" style="top:793px;padding-top:10.5px;font-size:42px;transform:scaleX(0.9)">8</div>
<div class="rowh" style="top:854px;padding-top:10.5px;font-size:42px;transform:scaleX(0.9)">9</div>
<div class="rowh" style="top:915px;padding-top:10.5px;font-size:42px;transform:scaleX(0.97)">10</div>
<div class="cell" style="left:84px;top:366px;width:201px;font-weight:bold;font-size:32px;padding-top:16px">Gadgets</div>
<div class="cell" style="left:286px;top:366px;width:201px;font-weight:bold;font-size:32px;padding-top:16px">Price</div>
<div class="cell" style="left:488px;top:366px;width:201px;font-weight:bold;font-size:32px;padding-top:16px;transform:scaleX(1.066)">Quantity</div>
<div class="cell" style="left:690px;top:366px;width:201px;font-weight:bold;font-size:32px;padding-top:16px;transform:scaleX(1.09)">Total</div>
<div class="cell" style="left:84px;top:427px;width:201px;padding-top:20px;transform:scaleX(1.05)">Laptop</div>
<div class="cell" style="left:286px;top:427px;width:201px;padding-top:20px">250,000</div>
<div class="cell" style="left:488px;top:427px;width:201px;padding-top:20px">6</div>
<div class="cell" style="left:84px;top:488px;width:201px;padding-top:20px">Speaker</div>
<div class="cell" style="left:286px;top:488px;width:201px;padding-top:20px">17,450</div>
<div class="cell" style="left:488px;top:488px;width:201px;padding-top:20px">9</div>
<div class="cell" style="left:84px;top:549px;width:201px;padding-top:20px;transform:scaleX(1.07)">Mouse</div>
<div class="cell" style="left:286px;top:549px;width:201px;padding-top:20px">5,500</div>
<div class="cell" style="left:488px;top:549px;width:201px;padding-top:20px">12</div>
<div class="cell" style="left:690px;top:427px;width:201px;padding-top:16px">1500000</div>
<div class="cell" style="left:690px;top:488px;width:201px;padding-top:16px">157050</div>
<div class="cell" style="left:690px;top:549px;width:201px;padding-top:16px">66000</div>

<svg style="left:0;top:0" width="1590" height="1020">
 <path d="M670 366 H689 V385 Z" fill="#ff0000"/>
 <path d="M695 373 L893 506" stroke="#2a6e48" stroke-width="1"/>
 <path d="M690 367 L703 370 L696.5 379 Z" fill="#237045"/>
</svg>
<div class="a" style="left:898px;top:510px;width:441px;height:262px;background:#ffffe1;border:3px solid #2a7048"></div>
<div class="t" style="left:907px;top:517px;font-size:40px;font-weight:bold;color:#000">User:</div>
<svg style="left:0;top:0" width="1590" height="1020">
 <g fill="#fff" stroke="#999" stroke-width="1">
  <rect x="888" y="501.5" width="11" height="11"/><rect x="1113" y="501.5" width="11" height="11"/><rect x="1338" y="501.5" width="11" height="11"/>
  <rect x="888" y="637" width="11" height="11"/><rect x="1338" y="637" width="11" height="11"/>
  <rect x="888" y="772" width="11" height="11"/><rect x="1113" y="772" width="11" height="11"/><rect x="1338" y="772" width="11" height="11"/>
 </g>
 <path d="M1121.2 775 L1131 804 L1111.5 804 Z" fill="#000"/>
 <rect x="1119" y="800" width="4.4" height="60" fill="#000"/>
</svg>
<div class="t" style="left:998px;top:860px;font-size:39px;font-weight:bold;color:#000">Comment Box</div>


<!-- vertical scrollbar -->
<div class="a" style="left:1558px;top:307px;width:30px;height:644px;background:#e6e6e6"></div>
<div class="a" style="left:1560px;top:333px;width:25px;height:594px;background:#d6d6d6"></div>
<div class="a" style="left:1560px;top:308px;width:25px;height:25px;background:#fff;border:1px solid #7a7a7a"></div>
<div class="a" style="left:1560px;top:333px;width:25px;height:267px;background:#fff;border:1px solid #7a7a7a;border-top:2px solid #777"></div>
<div class="a" style="left:1560px;top:928px;width:25px;height:24px;background:#fff;border:1px solid #7a7a7a"></div>
<!-- tab bar -->
<div class="a" style="left:2px;top:951px;width:1586px;height:34px;background:#e6e6e6;border-top:1px solid #a6a6a6"></div>
<div class="a" style="left:120px;top:951px;width:89px;height:34px;background:#fff;border-left:1px solid #c6c6c6;border-right:1px solid #c6c6c6"></div>
<div class="a" style="left:120px;top:981px;width:89px;height:3px;background:#217346"></div>
<div class="t" style="left:132px;top:957px;font-size:20px;font-weight:bold;color:#217346;transform:scaleX(0.97);transform-origin:0 0">Sheet1</div>
<div class="a" style="left:970px;top:955px;width:589px;height:25px;background:#d6d6d6"></div>
<div class="a" style="left:970px;top:955px;width:26px;height:25px;background:#fff;border:1px solid #7a7a7a"></div>
<div class="a" style="left:995px;top:955px;width:471px;height:25px;background:#fff;border:1px solid #7a7a7a"></div>
<div class="a" style="left:1534px;top:955px;width:25px;height:25px;background:#fff;border:1px solid #7a7a7a"></div>
<svg style="left:0;top:0" width="1590" height="1020">
 <path d="M1566 324 L1572.5 317.5 L1579 324 Z" fill="#666"/>
 <path d="M1566 937 L1572.5 943.5 L1579 937 Z" fill="#666"/>
 <path d="M985.5 961 L979 967.5 L985.5 974 Z" fill="#666"/>
 <path d="M1544 961 L1550.5 967.5 L1544 974 Z" fill="#666"/>
 <path d="M37 962 L31 967.5 L37 973 Z" fill="#c8c6c4"/>
 <path d="M66 962 L72 967.5 L66 973 Z" fill="#c8c6c4"/>
 <circle cx="259" cy="968" r="10.3" fill="none" stroke="#777" stroke-width="1.6"/>
 <path d="M259 962 V974 M253 968 H265" stroke="#555" stroke-width="1.8"/>
 <g fill="#b4b4b4"><rect x="950" y="960" width="3" height="3"/><rect x="950" y="966" width="3" height="3"/><rect x="950" y="972" width="3" height="3"/></g>
</svg>
<!-- status bar -->
<div class="a" style="left:2px;top:985px;width:1586px;height:33px;background:#f3f2f1;border-top:1px solid #e1dfdd"></div>
<div class="t" style="left:12px;top:995px;font-size:15.5px;color:#484644">Cell C1 commented by User</div>
<div class="a" style="left:1126px;top:985px;width:60px;height:33px;background:#d2d0ce"></div>
<svg style="left:0;top:980px" width="1590" height="40" viewBox="0 980 1590 40">
 <g fill="none" stroke="#3b3a39" stroke-width="1.5">
  <rect x="1146" y="992.5" width="19" height="18.5"/>
  <path d="M1146 998.5 H1165 M1146 1004.5 H1165 M1152.3 992.5 V1011 M1158.6 992.5 V1011"/>
  <rect x="1206" y="992.5" width="20" height="18.5"/>
  <rect x="1209.5" y="996" width="13" height="11.5"/>
  <path d="M1212 999.5 H1220 M1212 1002 H1220 M1212 1004.5 H1220" stroke-width="1"/>
  <path d="M1266 1011 V992.5 H1286 V1011 H1266 M1266 1001 H1276 V992.5 M1271 992.5 V997"/>
 </g>
 <path d="M1314 1002 H1325 M1490 1002 H1501 M1495.5 996.5 V1007.5" stroke="#605e5c" stroke-width="1.2"/>
 <path d="M1334 1002 H1482" stroke="#484644" stroke-width="1.6"/>
 <path d="M1408 997 V1007" stroke="#605e5c" stroke-width="1.4"/>
 <rect x="1431" y="993.5" width="8" height="16.5" fill="#605e5c"/>
</svg>
<div class="t" style="left:1520px;top:994px;font-size:15.5px;color:#605e5c">210%</div>

</body></html>
